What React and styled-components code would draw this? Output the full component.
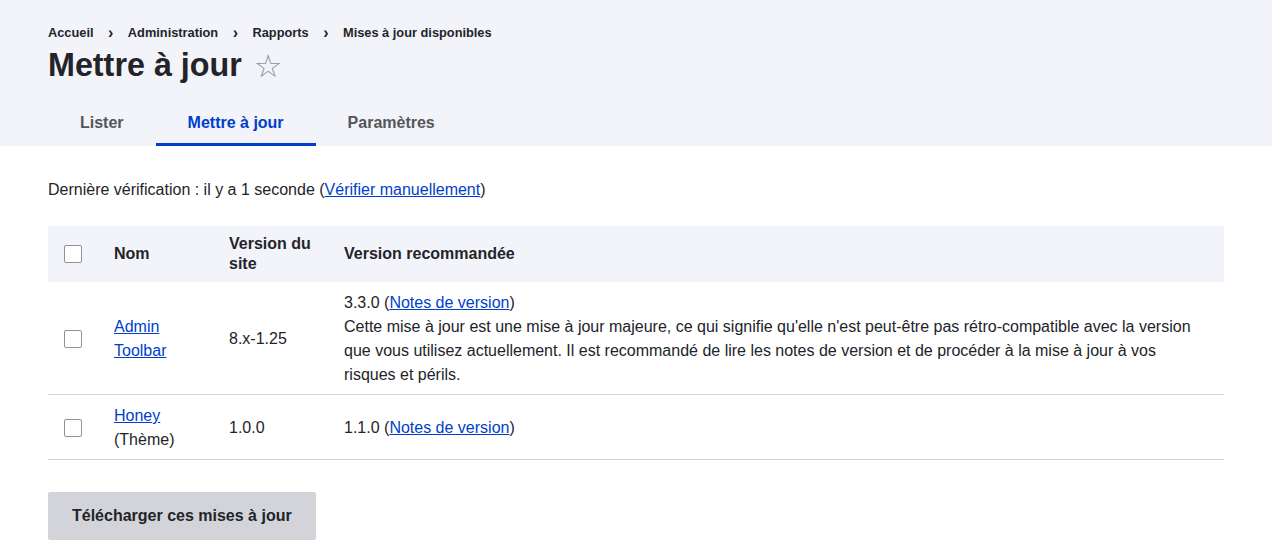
import React from "react";
import styled, { createGlobalStyle } from "styled-components";

const GlobalStyle = createGlobalStyle`
  body {
    margin: 0;
    font-family: "Liberation Sans", Arial, sans-serif;
    color: #232429;
    background: #fff;
  }
`;

const Header = styled.div`
  background: #f3f4f9;
  padding: 25px 48px 0;
`;

const Breadcrumb = styled.ol`
  display: flex;
  align-items: center;
  list-style: none;
  margin: 0;
  padding: 0;
  font-size: 12.8px;
  font-weight: 700;
  line-height: 16px;
`;

const Crumb = styled.li`
  display: flex;
  align-items: center;

  & + &::before {
    content: "›";
    font-size: 16px;
    padding: 0 14.5px;
  }
`;

const TitleRow = styled.div`
  display: flex;
  align-items: center;
  margin-top: 4px;
`;

const Title = styled.h1`
  margin: 0;
  font-size: 32.3px;
  line-height: 40px;
  font-weight: 700;
`;

const Star = styled.span`
  margin-left: 12px;
  font-size: 32px;
  line-height: 1;
  color: #8e929c;
  font-family: "DejaVu Sans", sans-serif;
  transform: translateY(1px);
`;

const Tabs = styled.nav`
  display: flex;
  margin-top: 13px;
`;

const Tab = styled.a`
  display: block;
  padding: 0 32px;
  height: 48px;
  line-height: 49px;
  font-size: 16px;
  font-weight: 700;
  text-decoration: none;
  color: ${(p) => (p.$active ? "#003ecc" : "#55565b")};
  border-bottom: 3px solid ${(p) => (p.$active ? "#003ecc" : "transparent")};
  box-sizing: border-box;
`;

const Main = styled.main`
  padding: 32px 48px 0;
  font-size: 16px;
  line-height: 24px;
`;

const Status = styled.p`
  margin: 0 0 24px;
`;

const Link = styled.a`
  color: #003ecc;
  text-decoration: underline;
`;

const Table = styled.table`
  width: 100%;
  border-collapse: collapse;
  table-layout: fixed;
`;

const Th = styled.th`
  background: #f3f4f9;
  text-align: left;
  font-weight: 700;
  line-height: 20px;
  padding: 8px 16px;
  height: 56px;
  box-sizing: border-box;
  vertical-align: middle;
`;

const Td = styled.td`
  padding: 9px 16px 7px;
  vertical-align: middle;
  border-bottom: 1px solid #d3d4d9;
`;

const Checkbox = styled.input.attrs({ type: "checkbox" })`
  appearance: none;
  display: block;
  width: 18px;
  height: 18px;
  margin: 0;
  border: 1px solid #8e929c;
  border-radius: 2px;
  background: #fff;
  box-sizing: border-box;
`;

const Button = styled.button`
  margin-top: 32px;
  padding: 0 24px;
  height: 48px;
  border: 0;
  border-radius: 2px;
  background: #d3d4d9;
  color: #232429;
  font-family: inherit;
  font-size: 16px;
  font-weight: 700;
`;

const rows = [
  {
    name: "Admin Toolbar",
    type: null,
    current: "8.x-1.25",
    recommended: "3.3.0",
    note:
      "Cette mise à jour est une mise à jour majeure, ce qui signifie qu'elle n'est peut-être pas rétro-compatible avec la version que vous utilisez actuellement. Il est recommandé de lire les notes de version et de procéder à la mise à jour à vos risques et périls.",
  },
  {
    name: "Honey",
    type: "(Thème)",
    current: "1.0.0",
    recommended: "1.1.0",
    note: null,
  },
];

export default function App() {
  return (
    <>
      <GlobalStyle />
      <Header>
        <Breadcrumb>
          <Crumb>Accueil</Crumb>
          <Crumb>Administration</Crumb>
          <Crumb>Rapports</Crumb>
          <Crumb>Mises à jour disponibles</Crumb>
        </Breadcrumb>
        <TitleRow>
          <Title>Mettre à jour</Title>
          <Star>☆</Star>
        </TitleRow>
        <Tabs>
          <Tab>Lister</Tab>
          <Tab $active>Mettre à jour</Tab>
          <Tab>Paramètres</Tab>
        </Tabs>
      </Header>
      <Main>
        <Status>
          Dernière vérification : il y a 1 seconde (
          <Link href="#">Vérifier manuellement</Link>)
        </Status>
        <Table>
          <colgroup>
            <col style={{ width: 50 }} />
            <col style={{ width: 115 }} />
            <col style={{ width: 115 }} />
            <col />
          </colgroup>
          <thead>
            <tr>
              <Th>
                <Checkbox />
              </Th>
              <Th>Nom</Th>
              <Th>Version du site</Th>
              <Th>Version recommandée</Th>
            </tr>
          </thead>
          <tbody>
            {rows.map((r) => (
              <tr key={r.name}>
                <Td>
                  <Checkbox />
                </Td>
                <Td>
                  <Link href="#">{r.name}</Link>
                  {r.type && <div>{r.type}</div>}
                </Td>
                <Td>{r.current}</Td>
                <Td>
                  {r.recommended} (<Link href="#">Notes de version</Link>)
                  {r.note && <div>{r.note}</div>}
                </Td>
              </tr>
            ))}
          </tbody>
        </Table>
        <Button>Télécharger ces mises à jour</Button>
      </Main>
    </>
  );
}
